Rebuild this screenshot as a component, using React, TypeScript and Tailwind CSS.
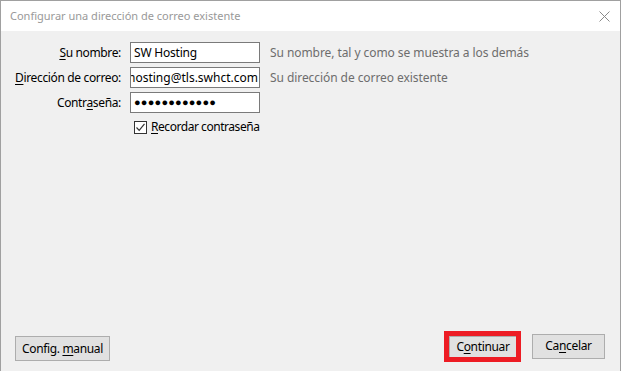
import React from 'react';

const font = { fontFamily: '"Noto Sans", "Open Sans", sans-serif' };

function U({ children }: { children: React.ReactNode }) {
  return <span className="underline underline-offset-2">{children}</span>;
}

export default function App() {
  return (
    <div
      className="h-[371px] w-[621px] flex flex-col border-l border-r border-t border-[#a0a0a0] bg-[#f0f0f0] text-[12px] text-black overflow-hidden"
      style={font}
    >
      {/* Title bar */}
      <div className="h-[30px] bg-white flex items-center justify-between pl-[9px] pr-[10px] shrink-0">
        <span className="text-[#999999] text-[11px]">Configurar una dirección de correo existente</span>
        <svg width="11" height="11" viewBox="0 0 11 11" className="mt-[1px]">
          <path d="M0.5 0.5 L10.5 10.5 M10.5 0.5 L0.5 10.5" stroke="#8a8a8a" strokeWidth="1" />
        </svg>
      </div>

      {/* Form */}
      <div className="flex-1 flex flex-col">
        <div className="grid grid-cols-[120px_130px_auto] gap-x-[9px] gap-y-[4px] pt-[11px] items-center">
          <label className="text-right tracking-[-0.35px]">
            <U>S</U>u nombre:
          </label>
          <div className="h-[21px] border border-[#7a7a7a] bg-white flex items-center px-[3px] overflow-hidden whitespace-nowrap tracking-[-0.2px]">
            SW Hosting
          </div>
          <span className="text-[#6d6d6d] pl-[1px] tracking-[-0.07px]">Su nombre, tal y como se muestra a los demás</span>

          <label className="text-right whitespace-nowrap tracking-[-0.35px]">
            <U>D</U>irección de correo:
          </label>
          <div className="h-[21px] border border-[#7a7a7a] bg-white flex items-center justify-end px-[1px] overflow-hidden whitespace-nowrap">
            hosting@tls.swhct.com
          </div>
          <span className="text-[#6d6d6d] pl-[1px] tracking-[-0.07px]">Su dirección de correo existente</span>

          <label className="text-right tracking-[-0.35px]">
            Contr<U>a</U>seña:
          </label>
          <div className="h-[21px] border border-[#7a7a7a] bg-white flex items-center px-[3px] overflow-hidden whitespace-nowrap text-[11px] tracking-[0.2px]">
            ●●●●●●●●●●●●
          </div>
          <span />

          <span />
          <div className="col-span-2 flex items-center gap-[4px] h-[20px] pl-[4px]">
            <span className="w-[13px] h-[13px] border border-[#333333] bg-white flex items-center justify-center">
              <svg width="11" height="11" viewBox="0 0 11 11">
                <path d="M1.5 5.5 L4.2 8.3 L9.5 1.8" fill="none" stroke="#333333" strokeWidth="1.2" />
              </svg>
            </span>
            <span className="tracking-[-0.45px]">
              <U>R</U>ecordar contraseña
            </span>
          </div>
        </div>
      </div>

      {/* Buttons */}
      <div className="flex items-end justify-between pl-[14px] pr-[15px] pb-[10px] shrink-0 tracking-[-0.35px]">
        <button className="h-[25px] w-[95px] border border-[#adadad] bg-[#e1e1e1] leading-none">
          Config. <U>m</U>anual
        </button>
        <div className="flex items-center gap-[11px]">
          <div className="border-[5px] border-[#ed1c24] -mb-[1px]">
            <button className="h-[21px] w-[67px] bg-[#e1e1e1] border-t border-l border-[#adadad] leading-none">
              C<U>o</U>ntinuar
            </button>
          </div>
          <button className="h-[25px] w-[73px] border border-[#adadad] bg-[#e1e1e1] leading-none">
            Ca<U>n</U>celar
          </button>
        </div>
      </div>
    </div>
  );
}
